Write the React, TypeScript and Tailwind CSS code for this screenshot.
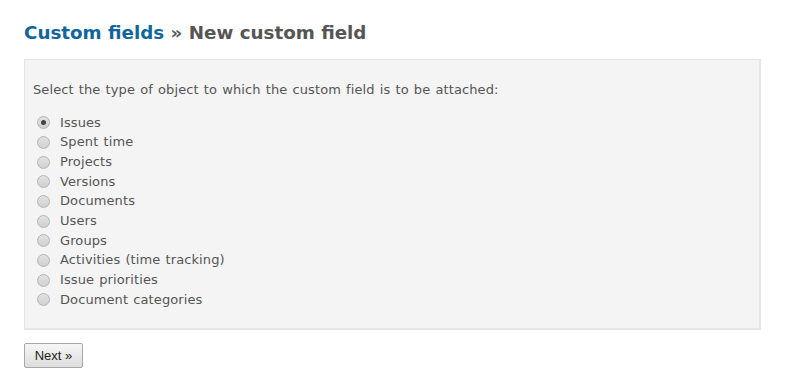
import React from "react";

const items = [
  "Issues",
  "Spent time",
  "Projects",
  "Versions",
  "Documents",
  "Users",
  "Groups",
  "Activities (time tracking)",
  "Issue priorities",
  "Document categories",
];

function Radio({ checked }: { checked: boolean }) {
  return (
    <span className="flex h-[13px] w-[13px] shrink-0 items-center justify-center rounded-full border border-[#b5b5b5] bg-gradient-to-b from-[#e2e2e2] to-[#d0d0d0]">
      {checked && <span className="h-[5px] w-[5px] rounded-full bg-[#444]" />}
    </span>
  );
}

export default function App() {
  return (
    <div className="min-h-[378px] w-[786px] bg-white px-[24px] pt-[22px] text-[13px] tracking-[0.1px] [word-spacing:0.9px] text-[#555] [font-family:'DejaVu_Sans',Verdana,sans-serif]">
      <h2 className="m-0 text-[18.3px] font-bold leading-[22px] tracking-normal [word-spacing:0px] text-[#555] [font-family:'DejaVu_Sans',Verdana,sans-serif]">
        <span className="text-[#169]">Custom fields</span> » New custom field
      </h2>
      <div className="mt-[15px] h-[271px] w-[737px] border border-[#e4e4e4] border-b-[2px] border-r-[2px] border-b-[#e6e6e6] border-r-[#e6e6e6] bg-[#f4f4f4] pl-[8px] pt-[22px]">
        <p className="m-0 leading-[16px]">
          Select the type of object to which the custom field is to be attached:
        </p>
        <div className="mt-[15px] flex flex-col pl-[4px]">
          {items.map((it, i) => (
            <label key={it} className="flex h-[19.67px] items-center gap-[10px]">
              <Radio checked={i === 0} />
              <span className="leading-[16px]">{it}</span>
            </label>
          ))}
        </div>
      </div>
      <button className="mt-[13px] h-[25px] w-[59px] rounded-[2px] border border-[#a8a8a8] bg-gradient-to-b from-[#f6f6f6] to-[#dddddd] text-[13px] tracking-normal [word-spacing:0px] text-[#222] [font-family:'Liberation_Sans',Arial,sans-serif]">
        Next »
      </button>
    </div>
  );
}
